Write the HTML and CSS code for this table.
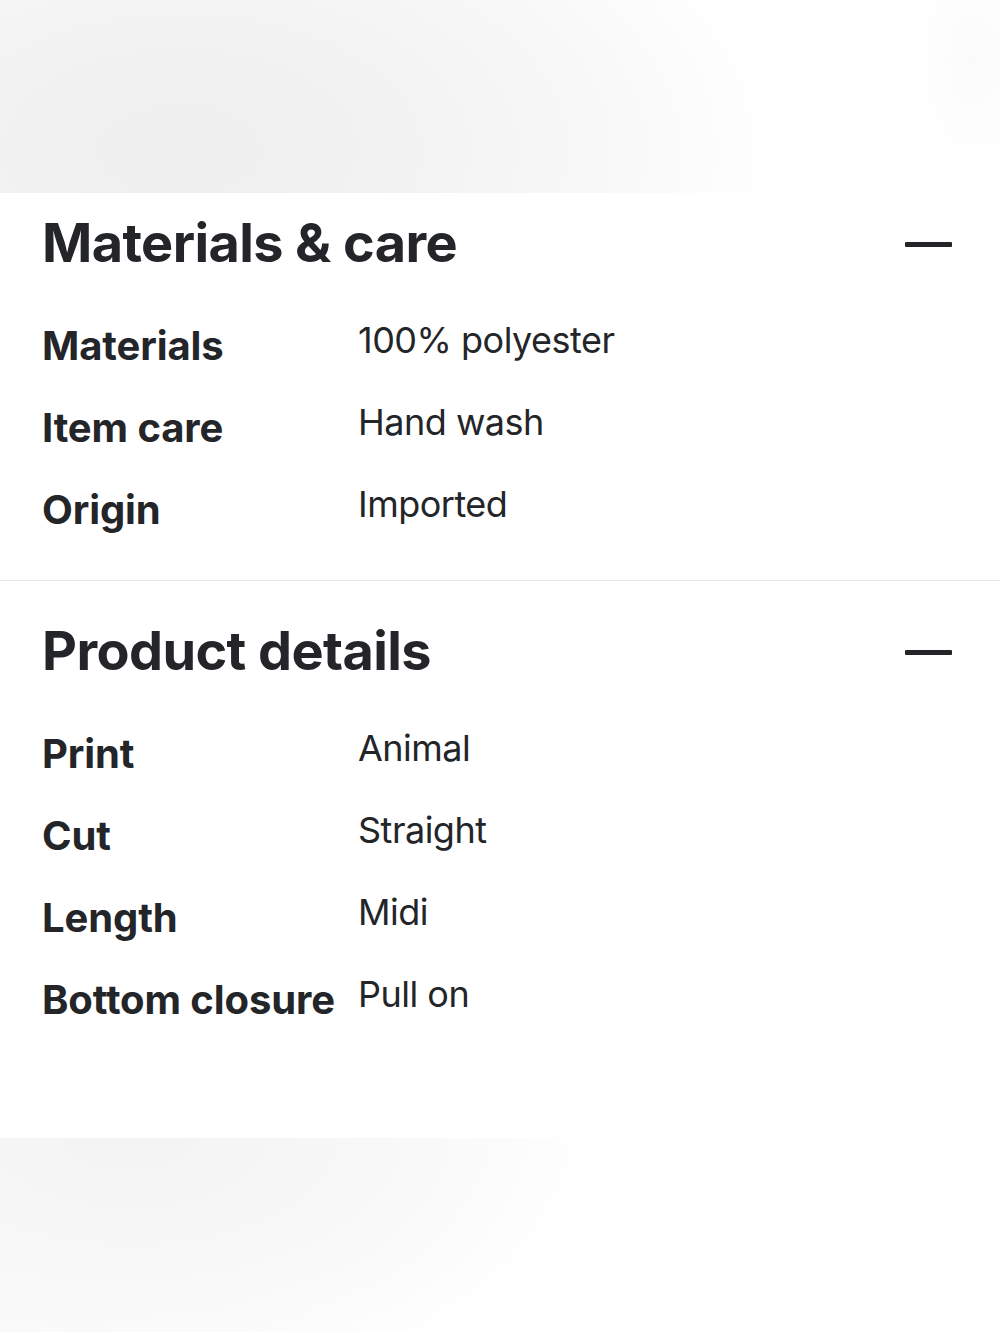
FILE: index.html
```html
<!DOCTYPE html>
<html lang="en">

<head>
    <meta charset="UTF-8">
    <meta name="viewport" content="width=device-width, initial-scale=1.0">
    <title>Product info</title>
    <link rel="stylesheet" href="styles.css">
</head>

<body>
    <div class="band band_top"></div>

    <div class="panel">
        <div class="section section_first">
            <div class="section_head">
                <h2>Materials &amp; care</h2>
                <span class="minus"></span>
            </div>
            <ul class="rows">
                <li><span class="label">Materials</span><span class="value">100% polyester</span></li>
                <li><span class="label">Item care</span><span class="value">Hand wash</span></li>
                <li><span class="label">Origin</span><span class="value">Imported</span></li>
            </ul>
        </div>

        <div class="section section_last">
            <div class="section_head">
                <h2>Product details</h2>
                <span class="minus"></span>
            </div>
            <ul class="rows">
                <li><span class="label">Print</span><span class="value">Animal</span></li>
                <li><span class="label">Cut</span><span class="value">Straight</span></li>
                <li><span class="label">Length</span><span class="value">Midi</span></li>
                <li><span class="label">Bottom closure</span><span class="value">Pull on</span></li>
            </ul>
        </div>
    </div>

    <div class="band band_bottom"></div>
</body>

</html>
```

FILE: styles.css
```css
* {
    margin: 0;
    padding: 0;
    box-sizing: border-box;
}

li {
    list-style: none;
}

body {
    width: 1000px;
    height: 1333px;
    background: #fff;
    font-family: Inter, "Liberation Sans", sans-serif;
    color: #232529;
    overflow: hidden;
}

.band {
    width: 100%;
}

.band_top {
    height: 193px;
    background:
        radial-gradient(ellipse 70px 120px at 975px 60px, #fbfbfc 0%, rgba(255, 255, 255, 0) 100%),
        radial-gradient(ellipse 600px 340px at 180px 150px, #efeff0 0%, #f2f2f3 35%, #f8f8f9 70%, rgba(255, 255, 255, 0) 100%),
        #fff;
}

.band_bottom {
    height: 194px;
    background:
        radial-gradient(ellipse 470px 240px at 130px 0px, #f3f3f4 0%, #f8f8f9 55%, rgba(255, 255, 255, 0) 100%),
        linear-gradient(90deg, #fbfbfc 0%, rgba(255, 255, 255, 0) 55%),
        #fff;
}

.panel {
    background: #fff;
}

.section {
    padding: 30px 48px 30px 42px;
}

.section_first {
    padding-top: 10px;
    border-bottom: 1px solid #e9e9ea;
}

.section_last {
    padding-bottom: 98px;
}

.section_head {
    height: 80px;
    display: flex;
    align-items: center;
    justify-content: space-between;
}

.section_head h2 {
    font-size: 54px;
    font-weight: 700;
    letter-spacing: -0.6px;
    line-height: 80px;
}

.minus {
    width: 47px;
    height: 5px;
    border-radius: 1px;
    background: #232529;
    margin-top: 2px;
}

.rows {
    margin-top: 21px;
}

.rows li {
    height: 82px;
    display: flex;
    align-items: center;
}

.label {
    width: 316px;
    flex: none;
    font-size: 40px;
    font-weight: 700;
    letter-spacing: -0.1px;
}

.value {
    font-size: 36px;
    font-weight: 400;
    margin-top: -10px;
    letter-spacing: -0.5px;
}
```
